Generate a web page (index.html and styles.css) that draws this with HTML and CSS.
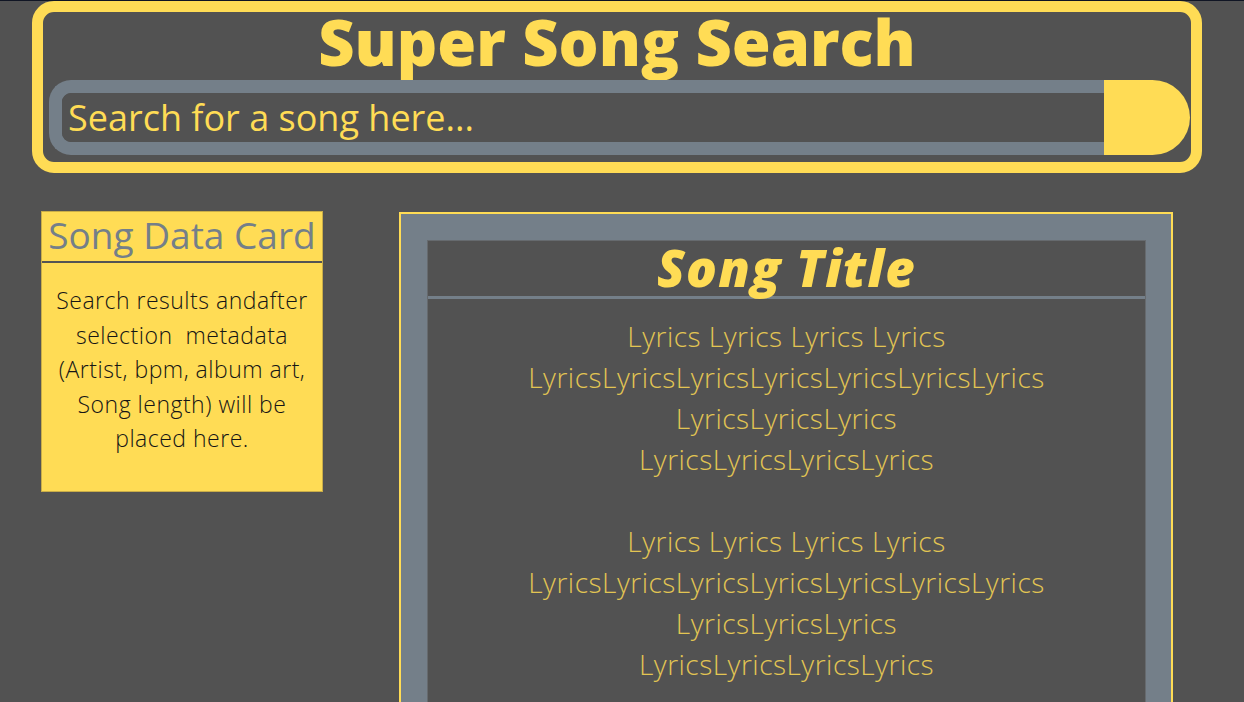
FILE: index.html
```html
<!DOCTYPE html>
<html lang="en">
<head>
<meta charset="utf-8">
<title>Super Song Search</title>
<link rel="stylesheet" href="styles.css">
</head>
<body>
<div class="page">
  <header class="header">
    <h1 class="site-title">Super Song Search</h1>
    <form class="search">
      <div class="search-field">
        <input class="search-input" type="text" placeholder="Search for a song here...">
      </div>
      <button class="search-btn" type="button" aria-label="Search"></button>
    </form>
  </header>
  <main class="content">
    <aside class="card">
      <h2 class="card-title">Song Data Card</h2>
      <p class="card-body">Search results andafter<br>selection&nbsp; metadata<br>(Artist, bpm, album art,<br>Song length) will be<br>placed here.</p>
    </aside>
    <section class="panel">
      <div class="panel-inner">
        <h2 class="song-title">Song Title</h2>
        <div class="lyrics">
          <p>Lyrics Lyrics Lyrics Lyrics<br>LyricsLyricsLyricsLyricsLyricsLyricsLyrics<br>LyricsLyricsLyrics<br>LyricsLyricsLyricsLyrics</p>
          <p>Lyrics Lyrics Lyrics Lyrics<br>LyricsLyricsLyricsLyricsLyricsLyricsLyrics<br>LyricsLyricsLyrics<br>LyricsLyricsLyricsLyrics</p>
        </div>
      </div>
    </section>
  </main>
</div>
</body>
</html>
```

FILE: styles.css
```css
* { box-sizing: border-box; }
html, body { margin: 0; padding: 0; }
body {
  background: #525252;
  font-family: "Open Sans", "Liberation Sans", sans-serif;
  overflow: hidden;
  height: 702px;
}
.page {
  border-top: 1px solid #101524;
}
.header {
  margin-left: 32px;
  width: 1170px;
  height: 172px;
  border: 11px solid #FFDC55;
  border-radius: 22px;
  padding: 0 1px 0 6px;
}
.site-title {
  margin: 0;
  height: 68px;
  line-height: 60px;
  font-size: 63px;
  font-weight: 800;
  color: #FFDC55;
  text-align: center;
  padding-right: 5px;
}
.search {
  display: flex;
  height: 75px;
  margin: 0;
}
.search-field {
  flex: 1;
  border: 13px solid #747f89;
  border-right: none;
  border-radius: 22px 0 0 22px;
  background: #525252;
  display: flex;
}
.search-input {
  flex: 1;
  border: none;
  outline: none;
  background: #525252;
  border-radius: 9px 0 0 9px;
  font-family: "Open Sans", sans-serif;
  font-size: 36px;
  color: #FFDC55;
  padding: 0 0 0 6px;
  height: 49px;
}
.search-input::placeholder { color: #FFDC55; opacity: 1; }
.search-btn {
  width: 86px;
  height: 75px;
  border: none;
  background: #FFDC55;
  border-radius: 0 38px 38px 0;
  padding: 0;
}
.content {
  display: flex;
  align-items: flex-start;
  padding-left: 41px;
  margin-top: 38px;
}
.card {
  width: 282px;
  height: 281px;
  background: #FFDC55;
  border: 1px solid #c9ad48;
}
.card-title {
  margin: 0;
  height: 51px;
  line-height: 46px;
  font-size: 37px;
  font-weight: 400;
  color: #747f89;
  text-align: center;
  border-bottom: 2px solid #545454;
}
.card-body {
  margin: 0;
  padding: 20px 0 0;
  font-size: 23px;
  font-weight: 300;
  letter-spacing: 0.5px;
  line-height: 34.5px;
  color: #151515;
  text-align: center;
  white-space: nowrap;
}
.panel {
  margin-left: 76px;
  margin-top: 1px;
  width: 774px;
  height: 520px;
  border: 2px solid #FFDC55;
  border-bottom: none;
  background: #747f89;
  padding: 26px 25px 0 26px;
}
.panel-inner {
  height: 100%;
  background: #525252;
  border: 1px solid #666a6e;
  border-bottom: none;
}
.song-title {
  margin: 0;
  height: 58px;
  line-height: 52px;
  font-size: 51px;
  font-weight: 800;
  font-style: italic;
  letter-spacing: 1.2px;
  color: #FFDC55;
  text-align: center;
  border-bottom: 3px solid #747f89;
}
.lyrics {
  padding-top: 17px;
  text-align: center;
  color: #e2c553;
  font-size: 28px;
  font-weight: 300;
  letter-spacing: 0.5px;
  line-height: 41px;
}
.lyrics p { margin: 0 0 41px; }
```
